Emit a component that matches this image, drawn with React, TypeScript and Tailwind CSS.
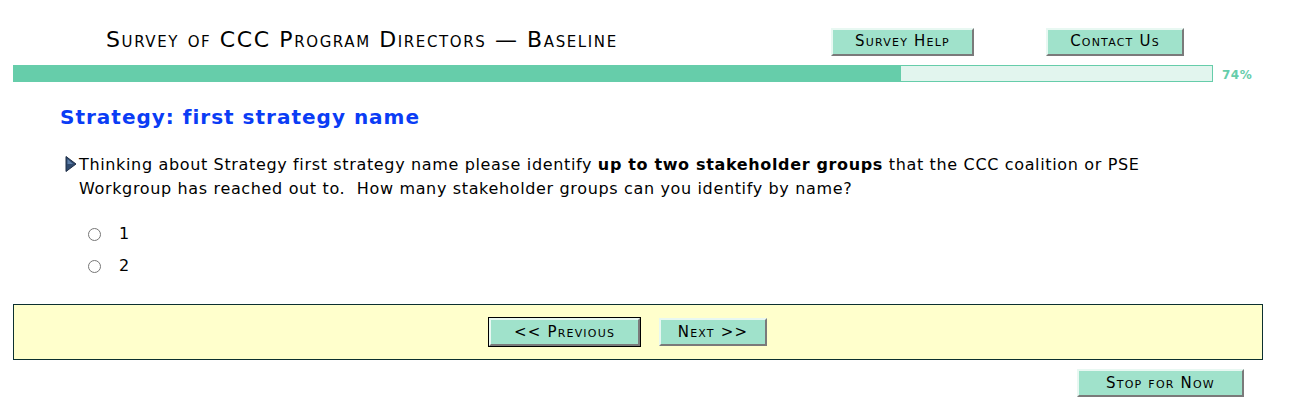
import React, { useState } from "react";

const font = "font-['DejaVu_Sans','Verdana',sans-serif]";

const SurveyButton: React.FC<{ label: string; className?: string; isDefault?: boolean }> = ({
  label,
  className = "",
  isDefault = false,
}) => {
  return (
    <button
      type="button"
      className={`${isDefault ? "outline outline-1 outline-black" : ""} h-[28px] bg-[#a0e2cb] border-2 border-t-[#e8f8f2] border-l-[#e8f8f2] border-r-[#7a7a7a] border-b-[#7a7a7a] text-[15px] tracking-[1.2px] leading-none text-black [font-variant:small-caps] ${className}`}
    >
      {label}
    </button>
  );
};

const App: React.FC = () => {
  const [answer, setAnswer] = useState<string>("");
  const progress = 74;

  return (
    <div className={`${font} w-[1296px] h-[407px] bg-white text-black overflow-hidden`}>
      {/* Header */}
      <div className="flex items-center h-[60px] pt-[23px]">
        <h1 className="ml-[106px] mb-[5px] w-[725px] text-[22px] tracking-[1.6px] [font-variant:small-caps]">
          Survey of CCC Program Directors — Baseline
        </h1>
        <SurveyButton label="Survey Help" className="w-[143px]" />
        <SurveyButton label="Contact Us" className="w-[138px] ml-[72px]" />
      </div>

      {/* Progress bar */}
      <div className="flex items-center mt-[5px] ml-[13px] h-[17px]">
        <div className="flex w-[1200px] h-[17px] bg-[#e2f5ee] border border-[#66cdaa]">
          <div className="h-full bg-[#66cdaa]" style={{ width: `${progress}%` }} />
        </div>
        <span className="ml-[9px] text-[12px] font-bold tracking-[0.5px] text-[#66cdaa] mt-[3px]">{progress}%</span>
      </div>

      {/* Heading */}
      <h2 className="ml-[60px] mt-[22px] text-[20px] font-bold tracking-[1px] text-[#0a3cf5] leading-[26px]">
        Strategy: first strategy name
      </h2>

      {/* Question */}
      <div className="flex ml-[65px] mt-[23px] w-[1100px]">
        <svg width="12" height="16" viewBox="0 0 12 16" className="mt-[3px] shrink-0">
          <path d="M1 0.5 L11 8 L1 15.5 Z" fill="#2f4a6e" stroke="#1c2c44" strokeWidth="1" />
          <path d="M2.5 3 L8 8 L2.5 8 Z" fill="#5d7ea8" />
        </svg>
        <p className="ml-[2px] w-[1080px] text-[16px] tracking-[0.65px] leading-[24px]">
          Thinking about Strategy first strategy name please identify{" "}
          <b>up to two stakeholder groups</b> that the CCC coalition or PSE Workgroup has reached out to.&nbsp; How
          many stakeholder groups can you identify by name?
        </p>
      </div>

      {/* Options */}
      <div className="flex flex-col ml-[88px] mt-[22px] gap-[10px]">
        {["1", "2"].map((opt) => (
          <label key={opt} className="flex items-center h-[22px] text-[16px] cursor-pointer">
            <input
              type="radio"
              name="groups"
              checked={answer === opt}
              onChange={() => setAnswer(opt)}
              className="w-[13px] h-[13px] m-0 accent-gray-400"
            />
            <span className="ml-[18px]">{opt}</span>
          </label>
        ))}
      </div>

      {/* Navigation */}
      <div className="flex items-center justify-center gap-[19px] ml-[13px] mt-[27px] w-[1250px] h-[56px] bg-[#ffffcc] border border-[#0c3030]">
        <SurveyButton label="<< Previous" className="w-[151px] ml-[-20px]" isDefault />
        <SurveyButton label="Next >>" className="w-[108px]" />
      </div>

      <div className="flex justify-end w-[1244px] mt-[9px]">
        <SurveyButton label="Stop for Now" className="w-[167px]" />
      </div>
    </div>
  );
};

export default App;
